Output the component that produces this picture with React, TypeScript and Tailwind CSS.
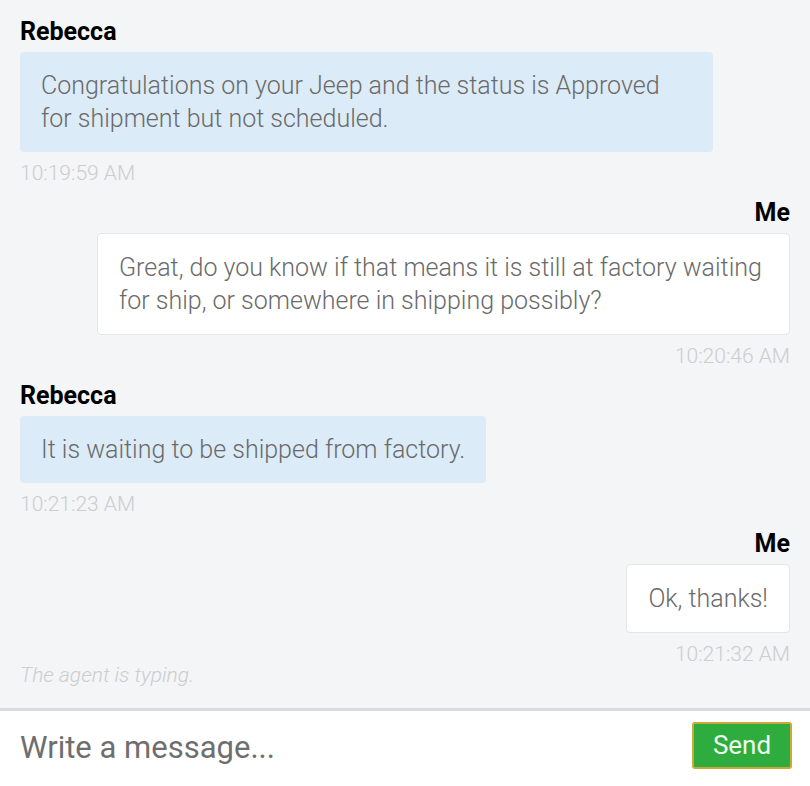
import React from "react";

interface Message {
  from: "agent" | "me";
  name: string;
  text: string;
  time: string;
}

const messages: Message[] = [
  {
    from: "agent",
    name: "Rebecca",
    text: "Congratulations on your Jeep and the status is Approved for shipment but not scheduled.",
    time: "10:19:59 AM",
  },
  {
    from: "me",
    name: "Me",
    text: "Great, do you know if that means it is still at factory waiting for ship, or somewhere in shipping possibly?",
    time: "10:20:46 AM",
  },
  {
    from: "agent",
    name: "Rebecca",
    text: "It is waiting to be shipped from factory.",
    time: "10:21:23 AM",
  },
  { from: "me", name: "Me", text: "Ok, thanks!", time: "10:21:32 AM" },
];

const Bubble = ({ from, name, text, time }: Message) => {
  const mine = from === "me";
  return (
    <div className={`flex flex-col ${mine ? "items-end" : "items-start"}`}>
      <span className="text-[25px] leading-[28px] font-bold text-black mb-[6px]">
        {name}
      </span>
      <div
        className={`max-w-[90%] rounded-[4px] px-[21px] py-[17px] text-[25px] leading-[33px] font-light text-[#6a6a6a] ${
          mine ? "bg-white border border-[#e4e6e8]" : "bg-[#dcebf8]"
        }`}
      >
        {text}
      </div>
      <span className="mt-[9px] text-[21px] leading-[24px] font-light text-[#cbcdcf]">
        {time}
      </span>
    </div>
  );
};

export default function App() {
  return (
    <div className="h-[786px] flex flex-col bg-[#f4f5f6] font-['Roboto',sans-serif]">
      <div className="flex-1 px-[20px] pt-[18px] flex flex-col gap-[14px] overflow-hidden">
        {messages.map((m, i) => (
          <Bubble key={i} {...m} />
        ))}
        <span className="-mt-[17px] text-[21px] leading-[24px] font-light italic text-[#cbcdcf]">
          The agent is typing.
        </span>
      </div>
      <div className="h-[78px] shrink-0 border-t-[3px] border-[#d8dbe0] bg-white flex items-center pl-[20px] pr-[18px] gap-3">
        <input
          className="flex-1 min-w-0 bg-transparent outline-none text-[31px] text-[#555] placeholder:text-[#6e6e6e]"
          placeholder="Write a message..."
        />
        <button className="w-[100px] h-[47px] mb-[6px] rounded-[3px] border-2 border-[#c9a93c] bg-[#2eac3d] text-[26px] text-[#f0fff0]">
          Send
        </button>
      </div>
    </div>
  );
}
